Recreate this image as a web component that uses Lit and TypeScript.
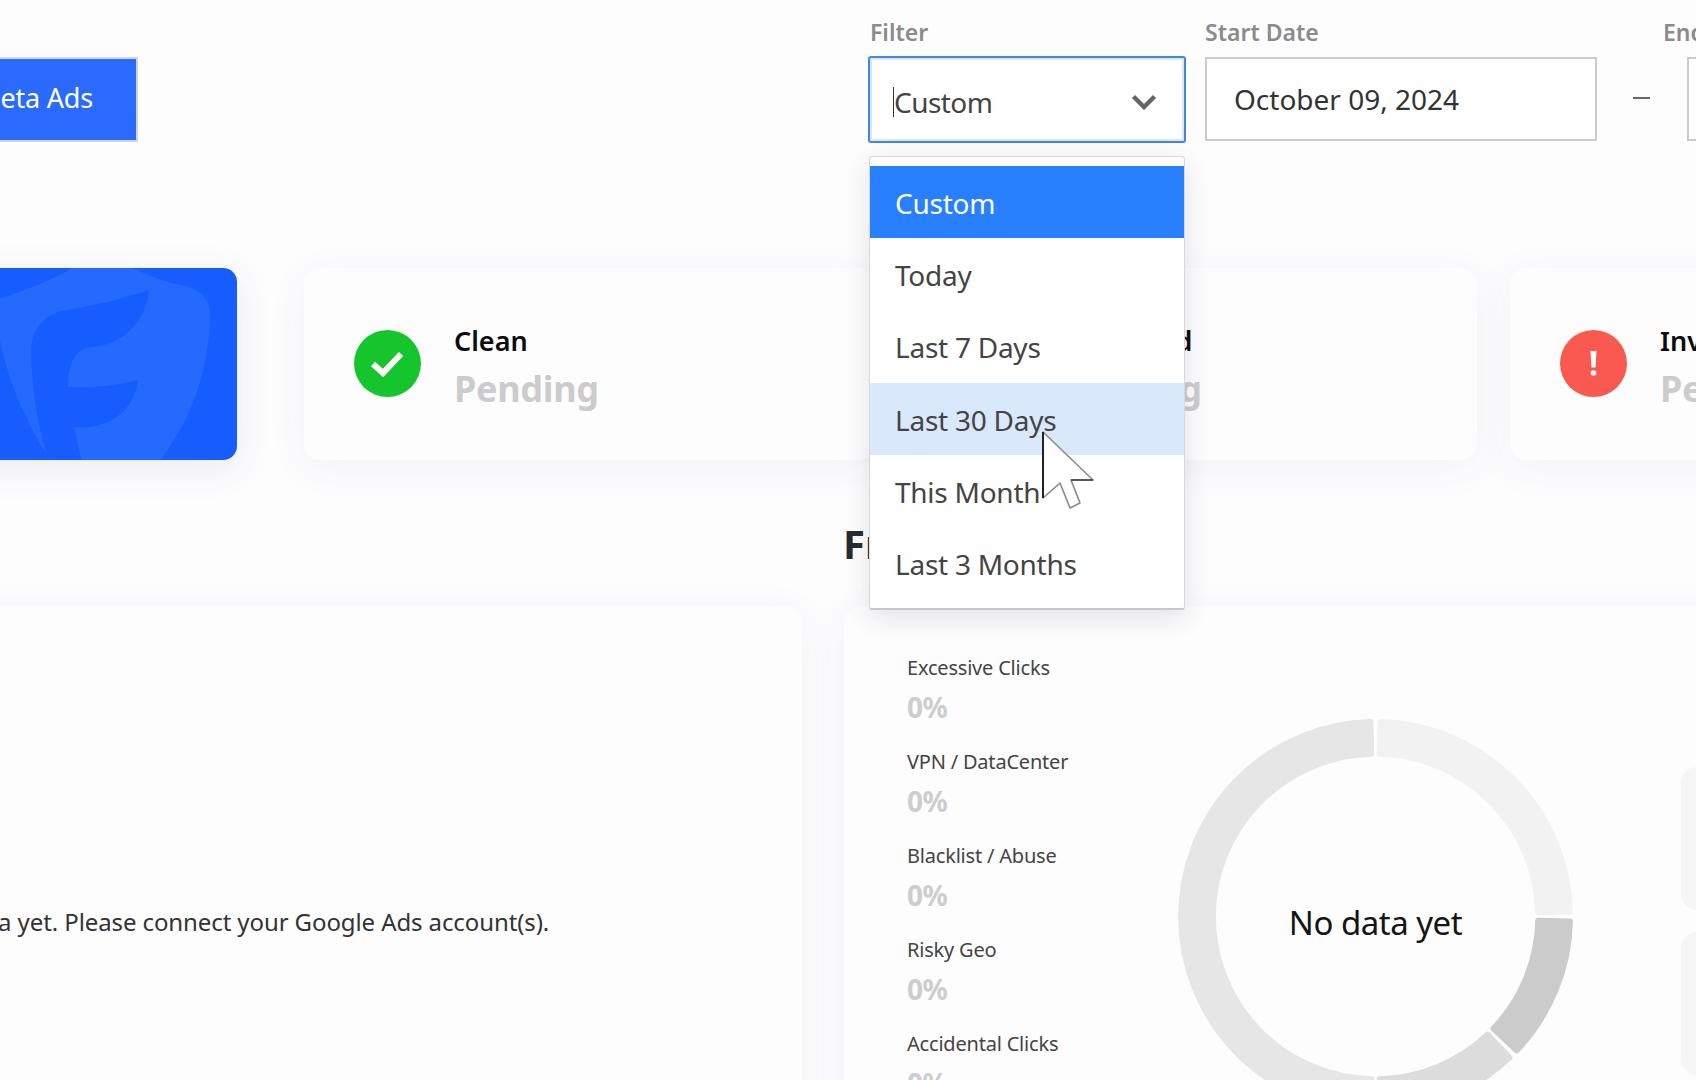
import { LitElement, html, css, svg } from "lit";
import { customElement } from "lit/decorators.js";

const CX = 200;
const CY = 200;
function sector(a0: number, a1: number): string {
  const rOut = 196;
  const rIn = 164;
  const pt = (r: number, a: number) => {
    const t = (a * Math.PI) / 180;
    return `${(CX + r * Math.sin(t)).toFixed(2)} ${(CY - r * Math.cos(t)).toFixed(2)}`;
  };
  const large = a1 - a0 > 180 ? 1 : 0;
  return `M${pt(rOut, a0)} A${rOut} ${rOut} 0 ${large} 1 ${pt(rOut, a1)} L${pt(rIn, a1)} A${rIn} ${rIn} 0 ${large} 0 ${pt(rIn, a0)} Z`;
}

const SEGMENTS = [
  { a0: 1.5, a1: 88.5, color: "#f2f2f2" },
  { a0: 91.5, a1: 133.5, color: "#cbcbcb" },
  { a0: 136.5, a1: 178.5, color: "#dcdcdc" },
  { a0: 181.5, a1: 358.5, color: "#e6e6e6" },
];

const LEGEND = ["Excessive Clicks", "VPN / DataCenter", "Blacklist / Abuse", "Risky Geo", "Accidental Clicks"];
const OPTIONS = ["Custom", "Today", "Last 7 Days", "Last 30 Days", "This Month", "Last 3 Months"];

@customElement("app-root")
export class AppRoot extends LitElement {
  static styles = css`
    :host {
      display: block;
      width: 1696px;
      height: 1080px;
      overflow: hidden;
      background: #fdfdfe;
      font-family: "Noto Sans", "Open Sans", sans-serif;
      position: relative;
    }
    .page {
      width: 2300px;
      margin-left: -200px;
      padding-top: 16px;
      display: flex;
      flex-direction: column;
    }
    .toolbar {
      display: flex;
      align-items: flex-end;
      height: 126px;
    }
    .meta {
      width: 338px;
      height: 85px;
      margin-bottom: 0;
      box-sizing: border-box;
      background: #2a6aff;
      border: 2px solid #d0d4dc;
      color: #fff;
      font-size: 27px;
      letter-spacing: -0.2px;
      display: flex;
      align-items: center;
      justify-content: flex-end;
      padding: 0 43px 4px 0;
    }
    .group {
      display: flex;
      flex-direction: column;
      position: relative;
    }
    .group.filter {
      margin-left: 730px;
      width: 318px;
    }
    .group.start {
      margin-left: 19px;
      width: 392px;
    }
    .group.end {
      margin-left: 66px;
      width: 415px;
    }
    .label {
      font-size: 23px;
      font-weight: 600;
      color: #8b8b8b;
      height: 33px;
      line-height: 33px;
      margin-bottom: 8px;
      letter-spacing: 0;
    }
    .group.filter .label {
      padding-left: 2px;
    }
    .input {
      height: 84px;
      box-sizing: border-box;
      border: 2px solid #cbcbcb;
      background: #fff;
      font-size: 28px;
      letter-spacing: 0;
      color: #333;
      display: flex;
      align-items: center;
      padding-left: 27px;
      margin-bottom: 1px;
    }
    .group.end .input {
      margin-left: 24px;
    }
    .select {
      height: 87px;
      box-sizing: border-box;
      border: 2px solid #3f86e6;
      border-radius: 3px;
      box-shadow: inset 0 0 0 2px #dbe8f8;
      background: #fff;
      font-size: 28px;
      letter-spacing: -0.55px;
      color: #444;
      display: flex;
      align-items: center;
      justify-content: space-between;
      padding: 4px 27px 0 23px;
      margin-top: -1px;
      margin-bottom: -1px;
    }
    .select .value {
      border-left: 1.5px solid #333;
      line-height: 30px;
    }
    .dash {
      position: absolute;
      left: -30px;
      bottom: 43px;
      width: 17px;
      height: 2px;
      background: #666;
    }
    .menu {
      position: absolute;
      left: 1px;
      top: 140px;
      width: 316px;
      box-sizing: border-box;
      padding: 9px 0;
      background: #fff;
      border: 1px solid #d8d8d8;
      border-bottom: 2px solid #c8c8c8;
      border-radius: 3px;
      box-shadow: 0 8px 26px rgba(40, 44, 60, 0.12);
      z-index: 5;
    }
    .option {
      height: 72.2px;
      box-sizing: border-box;
      padding: 2px 0 0 25px;
      display: flex;
      align-items: center;
      font-size: 28px;
      letter-spacing: -0.25px;
      color: #444;
    }
    .option.selected {
      background: #2880ff;
      color: #fff;
    }
    .option.hover {
      background: #d9e8fb;
    }
    .cards {
      display: flex;
      margin-top: 126px;
      height: 192px;
    }
    .card {
      border-radius: 16px;
      background: #fdfdfe;
      box-shadow: 0 8px 40px rgba(60, 70, 130, 0.06);
      display: flex;
      align-items: center;
      box-sizing: border-box;
      width: 569.5px;
      margin-right: 33.5px;
      padding-left: 50px;
      gap: 33px;
      flex: none;
    }
    .shield {
      width: 437px;
      margin-right: 67px;
      padding: 0;
      background: #175cff;
      overflow: hidden;
      border-radius: 14px;
      box-shadow: 0 8px 36px rgba(60, 70, 130, 0.1);
    }
    .shield svg {
      width: 437px;
      height: 192px;
      display: block;
    }
    .icon {
      width: 67px;
      height: 67px;
      display: block;
      flex: none;
      margin-top: -2px;
    }
    .info {
      padding-top: 8px;
    }
    .title {
      font-size: 27px;
      font-weight: 600;
      color: #0c0c0f;
      letter-spacing: 0;
      line-height: 36px;
      margin-bottom: 5px;
    }
    .pending {
      font-size: 36px;
      font-weight: 700;
      color: #cccccc;
      letter-spacing: -0.3px;
      line-height: 50px;
    }
    .heading {
      font-size: 40px;
      font-weight: 700;
      color: #262a33;
      margin-top: 57px;
      height: 54px;
      line-height: 54px;
      padding-left: 1043px;
      letter-spacing: 0;
    }
    .panels {
      display: flex;
      margin-top: 35px;
      gap: 42px;
    }
    .panel {
      background: #fdfdfe;
      border-radius: 18px;
      box-shadow: 0 8px 40px rgba(60, 70, 130, 0.06);
      height: 700px;
      flex: none;
    }
    .left {
      width: 1002px;
      display: flex;
      justify-content: center;
      padding: 296px 130px 0 0;
      box-sizing: border-box;
      font-size: 24px;
      letter-spacing: -0.1px;
      color: #333;
      line-height: 40px;
    }
    .right {
      width: 1100px;
      position: relative;
      display: grid;
      grid-template-columns: 270px 397px 1fr;
      column-gap: 0;
      padding: 44px 0 0 63px;
      box-sizing: border-box;
    }
    .legend {
      display: flex;
      flex-direction: column;
    }
    .legend-item {
      height: 94px;
    }
    .legend-label {
      font-size: 20px;
      letter-spacing: -0.2px;
      color: #444;
      line-height: 36px;
    }
    .legend-value {
      font-size: 28px;
      font-weight: 700;
      color: #cdcdcd;
      letter-spacing: -0.4px;
      line-height: 42px;
    }
    .donut {
      position: relative;
      width: 397px;
      height: 397px;
      margin-top: 68px;
    }
    .donut svg {
      width: 397px;
      height: 397px;
      display: block;
    }
    .donut-text {
      position: absolute;
      inset: 12px 0 0 0;
      display: flex;
      align-items: center;
      justify-content: center;
      font-size: 33px;
      letter-spacing: -0.5px;
      color: #151515;
    }
    .side {
      display: flex;
      flex-direction: column;
      gap: 22px;
      margin: 117px 0 0 107px;
    }
    .mini {
      width: 300px;
      height: 143px;
      background: #f6f6f6;
      border-radius: 16px;
    }
    .cursor {
      position: absolute;
      left: 1040px;
      top: 428px;
      width: 60px;
      height: 86px;
      z-index: 10;
      overflow: visible;
    }
  `;

  render() {
    return html`
      <div class="page">
        <div class="toolbar">
          <div class="meta">Connect Meta Ads</div>
          <div class="group filter">
            <div class="label">Filter</div>
            <div class="select">
              <span class="value">Custom</span>
              <svg width="26" height="16" viewBox="0 0 26 16" aria-hidden="true">
                <path d="M2.5 2.5 L13 13 L23.5 2.5" fill="none" stroke="#666" stroke-width="4.5" />
              </svg>
            </div>
            <div class="menu">
              ${OPTIONS.map(
                (o, i) => html`<div class="option ${i === 0 ? "selected" : ""} ${i === 3 ? "hover" : ""}">${o}</div>`,
              )}
            </div>
          </div>
          <div class="group start">
            <div class="label">Start Date</div>
            <div class="input">October 09, 2024</div>
          </div>
          <div class="group end">
            <div class="dash"></div>
            <div class="label">End Date</div>
            <div class="input">November 08, 2024</div>
          </div>
        </div>

        <div class="cards">
          <div class="card shield">
            <svg viewBox="-200 268 437 192" aria-hidden="true">
              <path
                fill="#2569ff"
                d="M-5 300 C12 294 42 286 72 268 L132 268 C150 276 170 284 186 286 C200 290 210 298 210 316 C210 350 200 410 160 460 L80 460 L74 427 L45 452 C20 410 -2 360 -5 300 Z"
              />
              <path
                fill="#175cff"
                d="M149 290 C120 300 90 306 62 311 C42 316 31 332 31 352 C32 390 38 425 46 452 L82 462 L74 427 C108 430 134 412 138 380 C118 386 92 388 68 387 C68 370 72 348 92 347 C118 346 146 325 149 290 Z"
              />
            </svg>
          </div>
          <div class="card">
            <svg class="icon" viewBox="0 0 67 67" aria-hidden="true">
              <circle cx="33.5" cy="33.5" r="33.5" fill="#14c62b" />
              <path d="M19 34 L29 43 L47 24" fill="none" stroke="#fff" stroke-width="6" />
            </svg>
            <div class="info">
              <div class="title">Clean</div>
              <div class="pending">Pending</div>
            </div>
          </div>
          <div class="card">
            <svg class="icon" viewBox="0 0 67 67" aria-hidden="true">
              <circle cx="33.5" cy="33.5" r="33.5" fill="#fbb321" />
              <rect x="31" y="19" width="5" height="20" fill="#fff" />
              <rect x="31" y="43" width="5" height="5" fill="#fff" />
            </svg>
            <div class="info">
              <div class="title">Suspected</div>
              <div class="pending">Pending</div>
            </div>
          </div>
          <div class="card">
            <svg class="icon" viewBox="0 0 67 67" aria-hidden="true">
              <circle cx="33.5" cy="33.5" r="33.5" fill="#f9594f" />
              <path d="M30.5 21 L36.5 21 L35.5 37.5 L31.5 37.5 Z" fill="#fff" />
              <circle cx="33.5" cy="43" r="2.8" fill="#fff" />
            </svg>
            <div class="info">
              <div class="title">Invalid</div>
              <div class="pending">Pending</div>
            </div>
          </div>
        </div>

        <div class="heading">Fraud Types</div>

        <div class="panels">
          <div class="panel left">No data yet. Please connect your Google Ads account(s).</div>
          <div class="panel right">
            <div class="legend">
              ${LEGEND.map(
                (l) => html`<div class="legend-item">
                  <div class="legend-label">${l}</div>
                  <div class="legend-value">0%</div>
                </div>`,
              )}
            </div>
            <div class="donut">
              <svg viewBox="0 0 400 400" aria-hidden="true">
                ${SEGMENTS.map(
                  (s) => svg`<path d=${sector(s.a0, s.a1)} fill=${s.color} stroke=${s.color} stroke-width="6" stroke-linejoin="round" />`,
                )}
              </svg>
              <div class="donut-text">No data yet</div>
            </div>
            <div class="side">
              <div class="mini"></div>
              <div class="mini"></div>
            </div>
          </div>
        </div>
      </div>
      <svg class="cursor" viewBox="0 0 60 86" aria-hidden="true">
        <path
          d="M3 4 L3 70 L20 55 L30 80 L40 75 L31 52 L53 52 Z"
          fill="#fff"
          stroke="#8a8a8a"
          stroke-width="1.6"
          stroke-linejoin="round"
        />
        <path d="M3 4 L3 70" fill="none" stroke="#222" stroke-width="2" />
        <path d="M31 52 L53 52" fill="none" stroke="#444" stroke-width="1.6" />
      </svg>
    `;
  }
}
